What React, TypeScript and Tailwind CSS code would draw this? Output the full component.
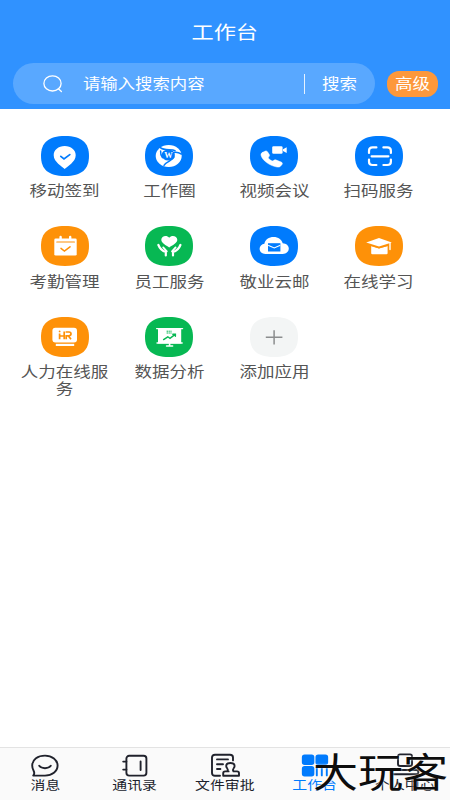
import type { ReactNode } from "react"
import clsx from "clsx"

type AppEntry = {
  label: string
  color: string
  glyph: ReactNode
}

type Tab = {
  label: string
  active?: boolean
  icon: ReactNode
}

const BLUE = "#007bfd"
const ORANGE = "#fe9108"
const GREEN = "#07b853"

const APPS: AppEntry[] = [
  {
    label: "移动签到",
    color: BLUE,
    glyph: (
      <>
        <path d="M23.7 33C21 30.2 12.7 26 12.7 19.2C12.7 14 17.4 10 23.7 10S34.7 14 34.7 19.2C34.7 26 26.4 30.2 23.7 33Z" fill="#fff" />
        <path d="M19.8 20.4L23 23L28.8 18.6" stroke={BLUE} strokeWidth="1.7" />
      </>
    ),
  },
  {
    label: "工作圈",
    color: BLUE,
    glyph: (
      <>
        <ellipse cx="23.7" cy="20" rx="13" ry="11" fill="#fff" />
        <ellipse cx="23.3" cy="19" rx="6.6" ry="5.5" fill={BLUE} />
        <path d="M15.4 11.6C19 15 27 12.6 30 14.6M29 16.4C32 15.8 34.4 16.8 36.4 18M17.4 21.6C16 19.6 15.4 17.6 15.6 15M29 21C27.4 25 22.4 24.4 19 29.4" stroke={BLUE} strokeWidth="1.5" />
        <text x="23.4" y="22" textAnchor="middle" fill="#fff" fontSize="8.5" fontWeight="700" fontFamily="Liberation Serif, serif">
          W
        </text>
      </>
    ),
  },
  {
    label: "视频会议",
    color: BLUE,
    glyph: (
      <>
        <rect x="22.2" y="10.3" width="10.4" height="7.4" rx="1.3" fill="#fff" />
        <path d="M33 13.2L36.7 11.2V17L33 15Z" fill="#fff" />
        <path
          d="M12.3 16.6L15 15.2C16 14.7 17 15 17.5 15.8L19.3 18.6C19.8 19.5 19.5 20.2 18.6 21C18 21.8 18.5 22.5 19.8 23.6C21.2 24.7 22.4 25.2 23.2 24.7C24.3 23.8 25.2 23.6 26.3 24.1L31.2 26.1C32.4 26.6 32.7 27.5 32 28.5L30.5 30.2C29.5 31.2 28 31.3 26 30.8C19 29.3 12.3 24.2 11.1 19.5C10.8 18.2 11.1 17.3 12.3 16.6Z"
          fill="#fff"
          stroke="#fff"
          strokeWidth=".5"
        />
      </>
    ),
  },
  {
    label: "扫码服务",
    color: BLUE,
    glyph: (
      <path
        d="M14 17V14.8Q14 11.4 17.6 11.4H21.4M28.4 11.4H32.2Q35.9 11.4 35.9 14.8V17M14 23.6V25.7Q14 29 17.6 29H21.4M28.4 29H32.2Q35.9 29 35.9 25.7V23.6M16.6 20.3H33.4"
        stroke="#fff"
        strokeWidth="2.2"
      />
    ),
  },
  {
    label: "考勤管理",
    color: ORANGE,
    glyph: (
      <>
        <rect x="13.3" y="12.6" width="22.4" height="17" rx="1.4" fill="#fff" />
        <path d="M19.6 11V15M29.2 11V15" stroke="#fff" strokeWidth="2.4" />
        <path d="M15.8 16H33.4" stroke={ORANGE} strokeWidth="1.2" />
        <path d="M20 22.4L23.4 25L29 20.8" stroke={ORANGE} strokeWidth="1.5" />
      </>
    ),
  },
  {
    label: "员工服务",
    color: GREEN,
    glyph: (
      <>
        <path d="M24.2 21.4C21 19.4 16.3 17 16.3 13.8C16.3 10 21.8 8.7 24.2 11.8C26.6 8.7 32.3 10 32.3 13.8C32.3 17 27.4 19.4 24.2 21.4Z" fill="#fff" />
        <path d="M13.4 19C14.8 22.6 17.4 25 20.8 26V29.4M35.4 19C34 22.6 31.4 25 28 26V29.4" stroke="#fff" strokeWidth="2.2" strokeLinejoin="round" />
        <path d="M18.2 21.4L21.8 25.3M30.6 21.4L27 25.3" stroke="#fff" strokeWidth="1.8" />
      </>
    ),
  },
  {
    label: "敬业云邮",
    color: BLUE,
    glyph: (
      <>
        <path d="M15.3 27.9C12 27.9 9.6 25.7 9.6 22.8C9.6 20 11.7 18.2 14.4 17.7C15 13.7 19 11 23.6 11C28.3 11 31.8 13.7 32.7 17.3C36.3 17.4 38.8 19.7 38.8 22.6C38.8 25.7 36.3 27.9 32.8 27.9Z" fill="#fff" />
        <rect x="18" y="17.2" width="12.4" height="8.3" fill={BLUE} />
        <path d="M18.6 19.4L24.2 22L29.8 19.4" stroke="#fff" strokeWidth="1.1" />
      </>
    ),
  },
  {
    label: "在线学习",
    color: ORANGE,
    glyph: (
      <>
        <path d="M11.2 16.6L24 12L36.8 16.6L24 20.6Z" fill="#fff" />
        <path d="M16.2 20L24 22.6L32.6 20V27.2Q32.6 28.3 31.4 28.3H17.4Q16.2 28.3 16.2 27.2Z" fill="#fff" />
        <path d="M16 19.6L24 22L32.6 19.6" stroke={ORANGE} strokeWidth=".9" />
        <path d="M35 17V23.6" stroke="#fff" strokeWidth="1.4" />
      </>
    ),
  },
  {
    label: "人力在线服务",
    color: ORANGE,
    glyph: (
      <>
        <rect x="11.4" y="10.8" width="24.6" height="14.8" rx="3" fill="#fff" />
        <path d="M14.8 27.9H33.2" stroke="#fff" strokeWidth="2.2" strokeLinecap="butt" />
        <path
          d="M18.6 16.4V22.2M18.6 19H23.2M23.2 14.4V22.2M24.6 15H28Q30 15 30 16.8T28 18.8H25.2V22.2M27.4 19L30 22.2"
          stroke={ORANGE}
          strokeWidth="1.7"
          strokeLinecap="butt"
        />
        <circle cx="18.6" cy="14.4" r=".9" fill={ORANGE} />
      </>
    ),
  },
  {
    label: "数据分析",
    color: GREEN,
    glyph: (
      <>
        <rect x="13" y="11.6" width="23.2" height="14.8" fill="#fff" />
        <path d="M11.6 11.6H37.6M12 26H37.2" stroke="#fff" strokeWidth="1.3" />
        <path d="M24.6 26V29M21.6 29H27.6" stroke="#fff" strokeWidth="1.6" />
        <path d="M18.6 22.6L22.8 19.8L25 21.4L30.2 17.4M27.8 17.2H30.4V19.2" stroke={GREEN} strokeWidth="1.4" />
        <path d="M21.6 14.2H26.6M21.6 16H26.6" stroke={GREEN} strokeWidth="1" strokeDasharray="1.4 .5" strokeLinecap="butt" />
      </>
    ),
  },
  {
    label: "添加应用",
    color: "#f3f5f5",
    glyph: <path d="M15.8 20.3H32.4M24.1 13.2V27.6" stroke="#8b8d8e" strokeWidth="1.5" strokeLinecap="butt" />,
  },
]

const TABS: Tab[] = [
  {
    label: "消息",
    icon: (
      <>
        <path d="M3.2 22.6C4.6 21 4.6 19.6 3.6 17.8C2.6 16 2.2 14.6 2.2 12.6C2.2 6.4 8 2.6 15 2.6S27.6 6.8 27.6 12.6S22 22.6 15 22.6Z" />
        <path d="M9.2 12.8C11.6 16 18.4 16 20.8 12.8" />
      </>
    ),
  },
  {
    label: "通讯录",
    icon: (
      <>
        <rect x="6.4" y="2.8" width="20" height="19.8" rx="2.8" />
        <path d="M3.2 8.6H6.4M3.2 16.6H6.4M20.6 8.4V17" />
      </>
    ),
  },
  {
    label: "文件审批",
    icon: (
      <>
        <path d="M10 22.8H5Q2 22.8 2 20V4.4Q2 1.8 5 1.8H20Q23 1.8 23 4.4V7.4M7 6.4H18M7 11.2H13M7 16H10.4" />
        <path d="M18.6 18.4H17.4C19 15.4 16.2 15.6 16.2 13C16.2 9 24.6 9 24.6 13C24.6 15.6 21.8 15.4 23.4 18.4H27Q29 18.4 29 20.2V22.8H13.2V20.2Q13.2 18.4 15.2 18.4H18.6" />
      </>
    ),
  },
  {
    label: "工作台",
    active: true,
    icon: (
      <>
        <rect x="2.8" y="2.4" width="10.6" height="8.6" rx="1.8" fill={BLUE} />
        <rect x="16.4" y="2.4" width="10.8" height="8.6" rx="1.8" fill={BLUE} />
        <rect x="2.8" y="14" width="10.6" height="8.6" rx="1.8" fill={BLUE} />
        <path d="M16.8 14.4V22.4M21.8 14.4V22.4M26.8 14.4V22.4" />
      </>
    ),
  },
  {
    label: "个人中心",
    icon: (
      <>
        <rect x="8" y="1.4" width="14" height="11.6" rx="2" />
        <rect x="1.6" y="17" width="26.8" height="4.2" rx="2" />
      </>
    ),
  },
]

function AppTile({ label, color, glyph }: AppEntry) {
  return (
    <div className="flex h-[90.7px] flex-col items-center">
      <svg viewBox="0 0 48 40" className="h-10 w-12 shrink-0" fill="none" strokeLinecap="round">
        <path d="M0 20C0 7 7 0 24 0S48 7 48 20S41 40 24 40S0 33 0 20Z" fill={color} />
        {glyph}
      </svg>
      <span className="mt-[5.5px] w-[75px] scale-x-[1.2] text-center text-[14.6px] leading-[17px] text-[#555]">
        {label}
      </span>
    </div>
  )
}

function TabItem({ label, active, icon }: Tab) {
  return (
    <div className={clsx("flex flex-1 flex-col items-center pt-[5px]", active ? "text-[#007bfd]" : "text-[#20222c]")}>
      <svg viewBox="0 0 30 25" className="h-[25px] w-[30px] shrink-0" fill="none" stroke="currentColor" strokeWidth="1.9" strokeLinecap="round" strokeLinejoin="round">
        {icon}
      </svg>
      <span className="-mt-px scale-x-[1.2] text-[12.4px] leading-[17px] whitespace-nowrap">{label}</span>
    </div>
  )
}

export default function App() {
  return (
    <div className="relative flex h-[800px] w-[450px] flex-col overflow-hidden bg-white font-['Noto_Sans_CJK_SC',sans-serif]">
      <header className="h-[109px] bg-[#3092ff] text-white">
        <h1 className="flex h-[63px] items-center justify-center text-[18.5px]">
          <span className="scale-x-[1.2]">工作台</span>
        </h1>
        <div className="flex items-center gap-3 pl-[13px]">
          <div className="flex h-[41px] w-[362px] items-center rounded-full bg-[#59a8ff] pl-[30px]">
            <svg viewBox="0 0 20 18" className="h-[18px] w-5" fill="none" stroke="currentColor" strokeWidth="1.3" strokeLinecap="round">
              <ellipse cx="9.5" cy="8.4" rx="8.6" ry="7.6" />
              <path d="M15.4 13.8L18.4 16.6" />
            </svg>
            <span className="-mt-0.5 ml-5 origin-left scale-x-[1.19] text-[14.6px]">请输入搜索内容</span>
            <span className="ml-auto h-5 w-px bg-white/85" />
            <span className="-mt-0.5 mr-[24px] ml-[17px] origin-left scale-x-[1.2] text-[14.6px]">搜索</span>
          </div>
          <button type="button" className="flex h-[26px] w-[51px] items-center justify-center rounded-[12px] bg-[#fd983b]">
            <span className="-mt-0.5 scale-x-[1.2] text-[14.6px]">高级</span>
          </button>
        </div>
      </header>

      <main className="grid flex-1 grid-cols-4 content-start pt-[26.5px] pr-[19px] pl-[12.5px]">
        {APPS.map((app) => (
          <AppTile key={app.label} {...app} />
        ))}
      </main>

      <nav className="flex h-[53px] border-t border-[#e3e3e3] bg-[#fafafa]">
        {TABS.map((tab) => (
          <TabItem key={tab.label} {...tab} />
        ))}
      </nav>

      {/* brand stamp over the bottom right corner */}
      <span className="absolute top-[750px] left-[313px] origin-left scale-x-[1.14] text-[39.5px] leading-10 whitespace-nowrap text-[#0d0d0d] [text-shadow:0_0_2px_#fff]">
        大玩客
      </span>
    </div>
  )
}
